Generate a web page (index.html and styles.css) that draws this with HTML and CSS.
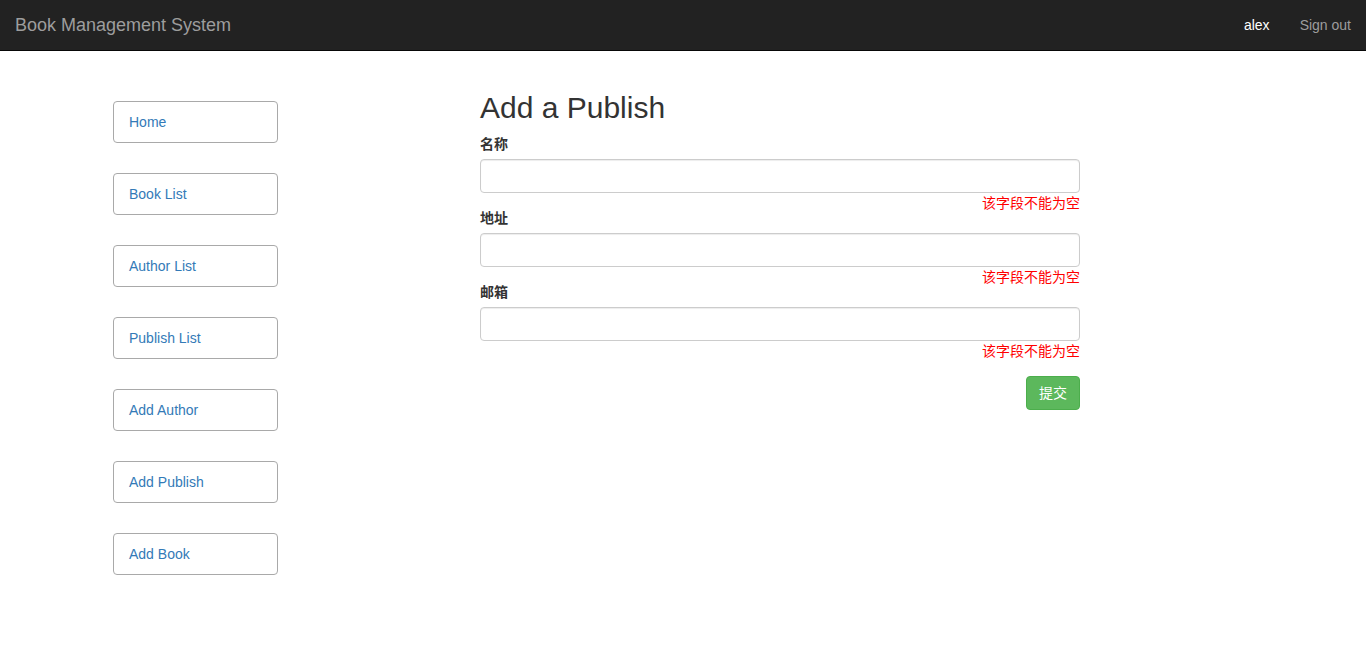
FILE: index.html
```html
<!DOCTYPE html>
<html lang="zh-CN">
<head>
<meta charset="utf-8">
<meta name="viewport" content="width=device-width, initial-scale=1">
<title>Book Management System</title>
<link rel="stylesheet" href="styles.css">
</head>
<body>
<header class="navbar">
  <a class="brand" href="#">Book Management System</a>
  <nav class="account">
    <a class="user" href="#">alex</a>
    <a href="#">Sign out</a>
  </nav>
</header>
<main class="page">
  <nav class="menu">
    <a href="#">Home</a>
    <a href="#">Book List</a>
    <a href="#">Author List</a>
    <a href="#">Publish List</a>
    <a href="#">Add Author</a>
    <a href="#">Add Publish</a>
    <a href="#">Add Book</a>
  </nav>
  <section class="content">
    <h1>Add a Publish</h1>
    <form>
      <div class="field">
        <label for="name">名称</label>
        <input id="name" type="text">
        <span class="error">该字段不能为空</span>
      </div>
      <div class="field">
        <label for="addr">地址</label>
        <input id="addr" type="text">
        <span class="error">该字段不能为空</span>
      </div>
      <div class="field">
        <label for="email">邮箱</label>
        <input id="email" type="text">
        <span class="error">该字段不能为空</span>
      </div>
      <button class="submit" type="submit">提交</button>
    </form>
  </section>
</main>
</body>
</html>
```
FILE: styles.css
```css
* {
  box-sizing: border-box;
}

body {
  margin: 0;
  background: #fff;
  color: #333;
  font: 14px/20px "Liberation Sans", Arial, "Noto Sans CJK SC", sans-serif;
}

a {
  color: #337ab7;
  text-decoration: none;
}

.navbar {
  display: flex;
  justify-content: space-between;
  min-height: 51px;
  background: #222;
  border-bottom: 1px solid #080808;
}

.navbar a {
  padding: 15px;
  color: #9d9d9d;
}

.navbar .brand {
  font-size: 18px;
}

.account {
  display: flex;
}

.navbar .user {
  color: #fff;
}

.page {
  display: grid;
  grid-template-columns: 113fr 165fr 202fr 600fr 286fr;
}

.menu {
  grid-column: 2;
  display: flex;
  flex-direction: column;
  gap: 30px;
  padding-top: 50px;
}

.menu a {
  padding: 10px 15px;
  border: 1px solid darkgray;
  border-radius: 4px;
}

.content {
  grid-column: 4;
  padding-top: 40px;
}

h1 {
  margin: 0 0 10px;
  font-size: 30px;
  font-weight: 500;
  line-height: 33px;
}

form,
.field {
  display: flex;
  flex-direction: column;
}

.field label {
  margin-bottom: 5px;
  font-weight: 700;
}

.field input {
  width: 100%;
  padding: 6px 12px;
  border: 1px solid #ccc;
  border-radius: 4px;
  box-shadow: inset 0 1px 1px rgba(0, 0, 0, 0.075);
  font: inherit;
}

.error {
  align-self: flex-end;
  margin-bottom: -5px;
  color: red;
}

.submit {
  align-self: flex-end;
  margin-top: 20px;
  padding: 6px 12px;
  border: 1px solid #4cae4c;
  border-radius: 4px;
  background: #5cb85c;
  color: #fff;
  font: inherit;
}
```
